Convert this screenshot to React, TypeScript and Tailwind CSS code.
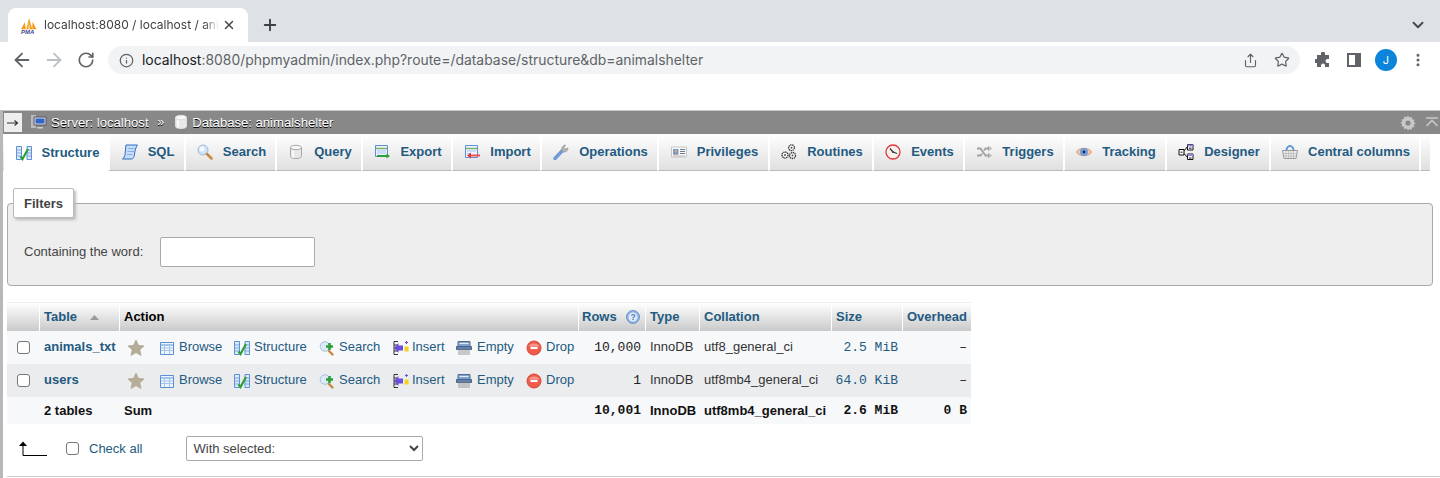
import React from "react";
import { ArrowLeft, ArrowRight, ChevronDown, Info, MoreVertical, Plus, RotateCw, Share, Star, X } from "lucide-react";

// tiny phpMyAdmin sprites, redrawn by hand on a 16 box
const Ico = ({ children, className = "" }: { children: React.ReactNode; className?: string }) => (
  <svg viewBox="0 0 16 16" className={`h-4 w-4 shrink-0 ${className}`}>{children}</svg>
);

const StructureIcon = () => (
  <Ico>
    <path d="M.5 1.500h5v13h-5z" fill="#dfeafa" stroke="#5b8fd6" />
    <path d="M11 1.500h4.500v13H11z" fill="#dfeafa" stroke="#5b8fd6" />
    <path d="M.5 5h5M.5 8h5M.5 11h5M11 5h4.500M11 8h4.500M11 11h4.500" stroke="#7aa5de" />
    <path d="M4.500 11.500l2 2.500L12 4" fill="none" stroke="#27a034" strokeWidth="2.200" />
  </Ico>
);
const SqlIcon = () => (
  <Ico>
    <path d="M4 1h11.500c-1.500 2-2.500 5-3 9S11 15 9 15H.5c1.500-1 2.500-3 2.500-4.500z" fill="#c6dcf8" stroke="#2f6cc4" />
    <path d="M6 4.500h6.500M5.500 7.500h6.500M5 10.500h5.500" stroke="#86aee6" />
  </Ico>
);
const SearchIcon = () => (
  <Ico>
    <circle cx="6" cy="6" r="5" fill="#cfe2f6" stroke="#9fbbd8" />
    <circle cx="5" cy="5" r="2.500" fill="#f5faff" />
    <path d="M10 10l4.500 4.500" stroke="#c9883b" strokeWidth="2.500" strokeLinecap="round" />
  </Ico>
);
const DbIcon = ({ tone = "#a8a8a8" }: { tone?: string }) => (
  <Ico>
    <path d="M2.500 3.500v9c0 1.200 2.400 2 5.500 2s5.500-.8 5.500-2v-9z" fill="#e8e8e8" stroke={tone} />
    <ellipse cx="8" cy="3.500" rx="5.500" ry="2.200" fill="#f8f8f8" stroke={tone} />
    <path d="M5 6.500v7" stroke="#fff" strokeWidth="1.500" />
  </Ico>
);
const ExportIcon = () => (
  <Ico>
    <path d="M1.500 1.500h12v11h-12z" fill="#eef5ff" stroke="#5b8fd6" />
    <path d="M2 4.500h11" stroke="#7fb26b" strokeWidth="1.500" />
    <path d="M3 7h9M3 9h9" stroke="#a9c4ea" />
    <path d="M3 12h10" stroke="#2f9e3a" strokeWidth="2" />
    <path d="M12.500 9.500l3.500 2.500-3.500 2.500z" fill="#2f9e3a" />
  </Ico>
);
const ImportIcon = () => (
  <Ico>
    <path d="M1.500 1.500h12v12h-12z" fill="#eef5ff" stroke="#5b8fd6" />
    <path d="M2 4.500h11" stroke="#7fb26b" strokeWidth="1.500" />
    <path d="M3 7h9M3 9.500h3" stroke="#a9c4ea" />
    <path d="M6 11.500h10" stroke="#ee5555" strokeWidth="2" />
    <path d="M7 8.500l-4 3 4 3z" fill="#e03a3a" />
  </Ico>
);
const WrenchIcon = () => (
  <Ico>
    <path d="M2 14.500l7.500-8" stroke="#6f9ad8" strokeWidth="3.500" strokeLinecap="round" />
    <path d="M9 6.500a4 4 0 0 1 3.500-5.500l-1.500 2.500 1.500 1.500 2.500-1a4 4 0 0 1-5 4z" fill="#b5b5b5" stroke="#8a8a8a" strokeWidth=".6" />
  </Ico>
);
const PrivilegesIcon = () => (
  <Ico>
    <path d="M.5 3h15v10H.5z" fill="#f8f8f8" stroke="#c6c6c6" />
    <path d="M2 5h5.500v5.500H2z" fill="#5f9ee8" />
    <circle cx="4.700" cy="7" r="1.500" fill="#eaa05a" />
    <path d="M2.500 10.500c.3-1.800 4-1.800 4.500 0z" fill="#d97c35" />
    <path d="M9 5.500h5M9 7.500h5M9 9.500h5" stroke="#6c7c96" />
    <path d="M2 12h12" stroke="#bbb" />
  </Ico>
);
const RoutinesIcon = () => (
  <Ico>
    <g fill="#fff" stroke="#333" strokeWidth="1.300" strokeDasharray="1.400 .6">
      <circle cx="10.500" cy="3.700" r="2.900" />
      <circle cx="4" cy="11" r="3" />
      <circle cx="11.500" cy="11.500" r="3" />
    </g>
    <circle cx="10.500" cy="3.700" r="1" fill="#555" />
    <circle cx="4" cy="11" r="1" fill="#555" />
    <circle cx="11.500" cy="11.500" r="1" fill="#555" />
  </Ico>
);
const EventsIcon = () => (
  <Ico>
    <circle cx="8" cy="8" r="7" fill="#f7f2ee" stroke="#e2383f" strokeWidth="1.300" />
    <path d="M8 8L5 4.500M8 8l4 1.500" stroke="#333" strokeWidth="1.200" />
    <circle cx="8" cy="8" r="1.100" fill="#444" />
  </Ico>
);
const TriggersIcon = () => (
  <Ico>
    <path d="M1 4.500h3.500l5 7H13M1 11.500h3.500l1.500-2M8 6.500l1.500-2H13" fill="none" stroke="#a2a2a2" strokeWidth="1.800" />
    <path d="M12.500 2.500l3 2-3 2zM12.500 9.500l3 2-3 2z" fill="#d0d0d0" stroke="#8c8c8c" strokeWidth=".6" />
  </Ico>
);
const TrackingIcon = () => (
  <Ico>
    <path d="M.5 8C3 3 13 3 15.500 8 13 13 3 13 .5 8z" fill="#f0c7a8" stroke="#d99a6c" />
    <circle cx="8" cy="8" r="4" fill="#6f9fe0" />
    <circle cx="8" cy="8" r="1.400" fill="#1d2b45" />
  </Ico>
);
const DesignerIcon = () => (
  <Ico>
    <path d="M9.500.5h5.500v5.500H9.500zM9.500 10h5.500v5.500H9.500zM1 5.500h5v5.500H1z" fill="#fff" stroke="#111" />
    <path d="M9.500.5h5.500v2H9.500zM9.500 10h5.500v2H9.500z" fill="#9486d6" />
    <path d="M2.500 8.200h2M11 4.200h2.500M11 14h2.500M6 7l3.500-4.500M6 9.500l3.500 4" stroke="#111" fill="none" />
  </Ico>
);
const BasketIcon = () => (
  <Ico>
    <path d="M4.500 6.500a3.500 4.500 0 0 1 7 0" fill="none" stroke="#5b9ad6" strokeWidth="2" />
    <path d="M.5 6.500h15l-1.500 8H2z" fill="#ececec" stroke="#9a9a9a" />
    <path d="M4 7v7M6.500 7v7M9 7v7M11.500 7v7M1.500 9.500h13M2 12h12" stroke="#b4b4b4" strokeWidth=".7" />
  </Ico>
);
const BrowseIcon = () => (
  <Ico>
    <path d="M1.500 2.500h13v12h-13z" fill="#eef5ff" stroke="#5b8fd6" />
    <path d="M2 5h12" stroke="#8ab4e6" strokeWidth="1.500" />
    <path d="M2 8h12M2 10.500h12M5.500 6v8M10.500 6v8" stroke="#a9c4ea" />
  </Ico>
);
const SearchPlusIcon = () => (
  <Ico>
    <circle cx="6" cy="6.500" r="4.800" fill="#dbe9f8" stroke="#a8c2dc" />
    <path d="M10 11l3.500 3.500" stroke="#c9883b" strokeWidth="2.400" strokeLinecap="round" />
    <path d="M10.500 3v7M7 6.500h7" stroke="#2f9e3a" strokeWidth="2.600" />
  </Ico>
);
const InsertIcon = () => (
  <Ico>
    <path d="M5 1.500H1v13h4M1 5h4M1 8h4M1 11h4" fill="none" stroke="#333" />
    <path d="M10 5.500v5H5.500v2.500L1 8l4.500-5v2.500z" fill="#6a4fd8" />
    <path d="M11.500 6.500h4v5h-4z" fill="#f2d21c" />
    <path d="M13.500 1v3M12 2.500h3" stroke="#6a4fd8" />
  </Ico>
);
const EmptyIcon = () => (
  <Ico>
    <path d="M2 1.500h12v5H2z" fill="#7ea3cf" stroke="#596e8a" />
    <path d="M.5 6.500h15v3H.5z" fill="#5f82ad" stroke="#4d6584" />
    <path d="M3.500 3.500h9" stroke="#e3edf9" />
    <path d="M3 9.500v5.500M5 9.500v5.500M7 9.500v5.500M9 9.500v5.500M11 9.500v5.500M13 9.500v5.500" stroke="#999" />
  </Ico>
);
const DropIcon = () => (
  <Ico>
    <circle cx="8" cy="8" r="7" fill="#ef5a4b" stroke="#dc4537" />
    <path d="M2.500 6.500a6 5 0 0 1 11 0" fill="#f79a8e" />
    <path d="M4.500 8h7" stroke="#fff" strokeWidth="2.200" />
  </Ico>
);
const TableStar = () => (
  <svg viewBox="0 0 18 18" className="h-[18px] w-[18px] shrink-0">
    <path d="M9 1l2.400 5.300 5.600.6-4.200 3.900 1.200 5.700L9 13.600l-5 2.900 1.200-5.700L1 6.900l5.600-.6z" fill="#b5ad97" stroke="#a29a85" strokeWidth=".6" />
  </svg>
);

const tabs = [
  { label: "Structure", icon: <StructureIcon />, w: "w-[104px]" },
  { label: "SQL", icon: <SqlIcon />, w: "w-[76px]" },
  { label: "Search", icon: <SearchIcon />, w: "w-[91px]" },
  { label: "Query", icon: <DbIcon />, w: "w-[86px]" },
  { label: "Export", icon: <ExportIcon />, w: "w-[90px]" },
  { label: "Import", icon: <ImportIcon />, w: "w-[89px]" },
  { label: "Operations", icon: <WrenchIcon />, w: "w-[117px]" },
  { label: "Privileges", icon: <PrivilegesIcon />, w: "w-[111px]" },
  { label: "Routines", icon: <RoutinesIcon />, w: "w-[104px]" },
  { label: "Events", icon: <EventsIcon />, w: "w-[91px]" },
  { label: "Triggers", icon: <TriggersIcon />, w: "w-[100px]" },
  { label: "Tracking", icon: <TrackingIcon />, w: "w-[102px]" },
  { label: "Designer", icon: <DesignerIcon />, w: "w-[104px]" },
  { label: "Central columns", icon: <BasketIcon />, w: "w-[150px]" },
];

const actions = [
  { label: "Browse", icon: <BrowseIcon />, w: "w-[75px]", gap: "gap-[4px]" },
  { label: "Structure", icon: <StructureIcon />, w: "w-[85px]", gap: "gap-[4px]" },
  { label: "Search", icon: <SearchPlusIcon />, w: "w-[74px]", gap: "gap-[4px]" },
  { label: "Insert", icon: <InsertIcon />, w: "w-[63px]", gap: "gap-[3px]" },
  { label: "Empty", icon: <EmptyIcon />, w: "w-[70px]", gap: "gap-[5px]" },
  { label: "Drop", icon: <DropIcon />, w: "w-[51px]", gap: "gap-[4px]" },
];

const rows = [
  { name: "animals_txt", count: "10,000", collation: "utf8_general_ci", size: "2.5 MiB", bg: "bg-[#f7f8fa]" },
  { name: "users", count: "1", collation: "utf8mb4_general_ci", size: "64.0 KiB", bg: "bg-[#ebecee]" },
];

const headCls = "h-[28px] border-l border-white bg-gradient-to-b from-white to-[#cacaca] px-[4px] text-left font-bold text-[#235a81]";
const mono = "font-['Liberation_Mono',monospace]";

const BrowserChrome = () => (
  <div className="font-['Inter',sans-serif]">
    <div className="flex h-[42px] items-end bg-[#dee1e6]">
      <div className="ml-[8px] flex h-[34px] w-[240px] items-center rounded-t-[8px] bg-white pl-[12px] text-[12px] text-[#3c4043]">
        <svg viewBox="0 0 16 16" className="h-[17px] w-[17px] shrink-0">
          <path d="M1 11.500L4.500 5l1 6.500zM6 11.500L8.500 1l3 10.500zM11.500 11.500L11.800 4.500l3.700 7z" fill="#f49a1c" />
          <path d="M7.500 11.500L8.500 4l1 7.500z" fill="#fbd27a" />
          <text x="1" y="15.800" fontSize="5.600" fontWeight="700" fontStyle="italic" fill="#3d3f8f" fontFamily="Liberation Sans">PMA</text>
        </svg>
        <span className="ml-[7px] w-[175px] overflow-hidden whitespace-nowrap [mask-image:linear-gradient(to_right,black_160px,transparent)]">localhost:8080 / localhost / animalshelter</span>
        <X size={14} strokeWidth={2.500} className="ml-[3px] text-[#45484c]" />
      </div>
      <Plus size={18} strokeWidth={2.500} className="mb-[8px] ml-[13px] text-[#3c4043]" />
      <ChevronDown size={18} strokeWidth={2.500} className="mb-[8px] ml-auto mr-[13px] text-[#45484c]" />
    </div>
    <div className="flex h-[36px] items-center bg-white">
      <div className="flex w-[108px] items-center pl-[11px] text-[#5f6368]">
        <ArrowLeft size={22} strokeWidth={2} />
        <ArrowRight size={22} strokeWidth={2} className="ml-[10px] text-[#bdc1c6]" />
        <RotateCw size={18} strokeWidth={2.200} className="ml-[12px]" />
      </div>
      <div className="flex h-[28px] w-[1192px] items-center rounded-full bg-[#f1f3f4] pl-[11px] pr-[10px]">
        <Info size={15} strokeWidth={2} className="text-[#5f6368]" />
        <span className="ml-[8px] text-[13.920px] text-[#5f6368]"><span className="text-[#202124]">localhost</span>:8080/phpmyadmin/index.php?route=/database/structure&amp;db=animalshelter</span>
        <Share size={15} strokeWidth={1.800} className="ml-auto text-[#5f6368]" />
        <Star size={16} strokeWidth={1.800} className="ml-[16px] text-[#5f6368]" />
      </div>
      <svg viewBox="0 0 16 16" className="ml-[15px] h-4 w-4 text-[#5f6368]">
        <path d="M6 1.500a2 2 0 0 1 4 0V3h4v4h-1.500a2 2 0 0 0 0 4H14v4h-4v-1.500a2 2 0 0 0-4 0V15H2v-4H.5a2 2 0 0 1 0-4H2V3h4z" fill="currentColor" />
      </svg>
      <div className="ml-[16px] h-[14px] w-[14px] border-2 border-[#5f6368] bg-[linear-gradient(to_right,white_65%,#5f6368_65%)]" />
      <div className="ml-[14px] flex h-[22px] w-[22px] items-center justify-center rounded-full bg-[#0b84da] text-[11px] text-white">J</div>
      <MoreVertical size={16} strokeWidth={2.500} className="ml-[13px] text-[#5f6368]" />
    </div>
    <div className="h-[32px] bg-white" />
  </div>
);

const App = () => (
  <div className="h-[478px] w-[1440px] overflow-hidden bg-white font-['Liberation_Sans',Arial,sans-serif] text-[13px] text-[#444]">
    <BrowserChrome />
    <div className="flex h-[368px] border-l-[3px] border-[#b8b8b8]">
      <div className="min-w-0 flex-1">
        <div className="flex h-[24px] items-center border-t border-[#c8c8c8] bg-[#888] text-white [text-shadow:0_1px_0_#000]">
          <div className="ml-[1px] flex h-[19px] w-[18px] items-center justify-center bg-[#eee] text-[#333] [text-shadow:none]">
            <svg viewBox="0 0 12 8" className="h-2 w-3"><path d="M0 4h10M7.500 1.500L10.500 4 7.500 6.500" fill="none" stroke="#333" strokeWidth="1.200" /></svg>
          </div>
          <div className="ml-[9px] flex items-center">
            <svg viewBox="0 0 16 16" className="h-4 w-4">
              <path d="M0 1h5v13H0z" fill="#bbb" />
              <path d="M3 3h12v8H3z" fill="#ddd" stroke="#556" />
              <path d="M4.500 4.500h9v5h-9z" fill="#2f64c8" />
              <path d="M6 13h6v1.500H6z" fill="#ccc" />
            </svg>
            <span className="ml-[4px] text-[13.100px]">Server: localhost</span>
            <span className="mx-[9px] text-[12px]">»</span>
            <DbIcon tone="#ddd" />
            <span className="ml-[3px] text-[13.100px]">Database: animalshelter</span>
          </div>
          <svg viewBox="0 0 16 16" className="ml-auto h-4 w-4">
            <path d="M8 .5l1.300 2 2.300-.7.500 2.400 2.400.5-.7 2.300 2 1.300-2 1.300.7 2.300-2.400.5-.5 2.400-2.300-.7L8 15.500l-1.300-2-2.300.7-.5-2.400-2.400-.5.7-2.300L.2 8l2-1.300-.7-2.300 2.400-.5.500-2.400 2.300.7z" fill="#c8c8c8" />
            <circle cx="8" cy="8" r="2.600" fill="#888" />
          </svg>
          <svg viewBox="0 0 14 12" className="ml-[9px] mr-[1px] h-3 w-[14px]">
            <path d="M1 1h12M1.500 9L7 3.500 12.500 9" fill="none" stroke="#c8c8c8" strokeWidth="1.600" />
          </svg>
        </div>

        <div className="flex h-[37px] w-[1427px] bg-gradient-to-b from-white to-[#dfdfdf]">
          {tabs.map((t, i) => (
            <div
              key={t.label}
              className={`flex ${t.w} ${i === 0 ? "ml-[1px] bg-white pl-[3px]" : "border-b border-[#bbb] border-l-2 border-l-white pl-[2px]"} items-center justify-center gap-[10px] font-bold text-[#235a81]`}
            >
              {t.icon}
              <span className="whitespace-nowrap">{t.label}</span>
            </div>
          ))}
          <div className="flex-1 border-b border-[#bbb] border-l-2 border-l-white" />
        </div>

        <div className="pl-[4px] pt-[17px]">
          <fieldset className="w-[1426px] rounded-[4px] border border-[#aaa] bg-[#eee] pb-[18px] pl-[16px]">
            <legend className="-ml-[11px] flex h-[30px] w-[61px] items-center justify-center rounded-[2px] border border-[#bbb] bg-white pt-[1px] font-bold shadow-[2px_2px_3px_#bbb]">Filters</legend>
            <div className="flex items-center pt-[19px]">
              <span>Containing the word:</span>
              <input className="ml-[17px] h-[30px] w-[155px] rounded-[2px] border border-[#aaa] bg-white" />
            </div>
          </fieldset>

          <table className="mt-[16px] w-[964px] table-fixed border-separate border-spacing-0 border-t border-[#eee]">
            <colgroup>
              <col className="w-[32px]" />
              <col className="w-[80px]" />
              <col className="w-[459px]" />
              <col className="w-[67px]" />
              <col className="w-[54px]" />
              <col className="w-[132px]" />
              <col className="w-[71px]" />
              <col className="w-[69px]" />
            </colgroup>
            <thead>
              <tr>
                <th className="h-[28px] bg-gradient-to-b from-white to-[#cacaca]" />
                <th className={headCls}>
                  <span className="flex items-center">
                    Table
                    <svg viewBox="0 0 9 5" className="ml-[13px] h-[5px] w-[9px]"><path d="M4.500 0L9 5H0z" fill="#999" /></svg>
                  </span>
                </th>
                <th className={`${headCls} !text-black`}>Action</th>
                <th className={`${headCls} !pl-[3px]`}>
                  <span className="flex items-center justify-between">
                    Rows
                    <svg viewBox="0 0 14 14" className="mr-[1px] h-[14px] w-[14px]">
                      <circle cx="7" cy="7" r="6.500" fill="#8fb2e0" stroke="#6f94c8" />
                      <circle cx="7" cy="7" r="4.500" fill="#dfeafa" />
                      <text x="7" y="10" textAnchor="middle" fontSize="8.500" fontWeight="700" fill="#4f78b8" fontFamily="Liberation Sans">?</text>
                    </svg>
                  </span>
                </th>
                <th className={headCls}>Type</th>
                <th className={headCls}>Collation</th>
                <th className={headCls}>Size</th>
                <th className={headCls}>Overhead</th>
              </tr>
            </thead>
            <tbody>
              {rows.map((r) => (
                <tr key={r.name} className={`h-[33px] ${r.bg}`}>
                  <td className="pl-[10px]">
                    <input type="checkbox" className="block h-[13px] w-[13px] appearance-none rounded-[3px] border border-[#767676] bg-white" readOnly />
                  </td>
                  <td className="px-[5px] pb-[2px] font-bold text-[#235a81]">{r.name}</td>
                  <td className="pl-[8px]">
                    <div className="flex items-center whitespace-nowrap text-[#235a81]">
                      <span className="w-[32px]"><TableStar /></span>
                      {actions.map((a) => (
                        <span key={a.label} className={`flex ${a.w} ${a.gap} items-center`}>
                          {a.icon}
                          <span className="pb-[2px]">{a.label}</span>
                        </span>
                      ))}
                    </div>
                  </td>
                  <td className={`pr-[4px] text-right text-[#222] ${mono}`}>{r.count}</td>
                  <td className="pb-[2px] pl-[5px] text-[#333]">InnoDB</td>
                  <td className="whitespace-nowrap pb-[2px] pl-[5px] text-[#333]">{r.collation}</td>
                  <td className={`pr-[4px] text-right text-[#235a81] ${mono}`}>{r.size}</td>
                  <td className={`pr-[4px] text-right text-[#222] ${mono}`}>–</td>
                </tr>
              ))}
              <tr className="h-[27px] bg-[#f7f8fa] font-bold text-[#111]">
                <td />
                <td className="px-[5px]">2 tables</td>
                <td className="pl-[5px]">Sum</td>
                <td className={`pr-[4px] text-right ${mono}`}>10,001</td>
                <td className="pl-[5px]">InnoDB</td>
                <td className="whitespace-nowrap pl-[5px]">utf8mb4_general_ci</td>
                <td className={`pr-[4px] text-right ${mono}`}>2.6 MiB</td>
                <td className={`pr-[4px] text-right ${mono}`}>0 B</td>
              </tr>
            </tbody>
          </table>

          <div className="mt-[12px] flex h-[25px] items-center pl-[12px]">
            <svg viewBox="0 0 28 16" className="h-4 w-7">
              <path d="M4 3v11.500h24" fill="none" stroke="#000" />
              <path d="M4 .5L8 5H0z" fill="#000" />
            </svg>
            <input type="checkbox" className="ml-[19px] block h-[13px] w-[13px] appearance-none rounded-[3px] border border-[#767676] bg-white" readOnly />
            <span className="ml-[10px] text-[#235a81]">Check all</span>
            <select className="ml-[44px] h-[25px] w-[237px] rounded-[2px] border border-[#aaa] bg-white pl-[2px] text-[#444]">
              <option>With selected:</option>
            </select>
          </div>
          <div className="mt-[15px] h-[1px] bg-[#ccc]" />
        </div>
      </div>
    </div>
  </div>
);

export default App;
